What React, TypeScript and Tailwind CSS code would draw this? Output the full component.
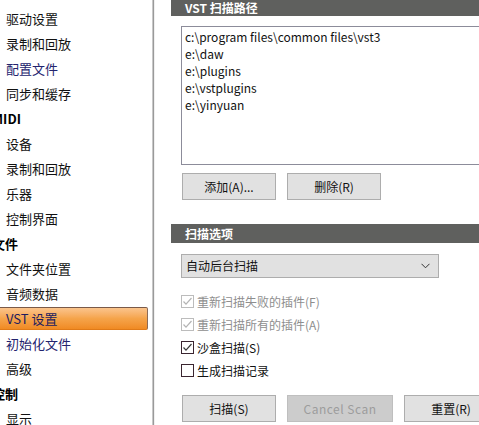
import type { ReactNode } from "react";

const FONT = "font-['Segoe_UI','Noto_Sans_CJK_SC','Noto_Sans',sans-serif]";

type NavRow =
  | { kind: "head"; label: string }
  | { kind: "item"; label: string; navy?: boolean; selected?: boolean };

const nav: NavRow[] = [
  { kind: "item", label: "驱动设置" },
  { kind: "item", label: "录制和回放" },
  { kind: "item", label: "配置文件", navy: true },
  { kind: "item", label: "同步和缓存" },
  { kind: "head", label: "MIDI" },
  { kind: "item", label: "设备" },
  { kind: "item", label: "录制和回放" },
  { kind: "item", label: "乐器" },
  { kind: "item", label: "控制界面" },
  { kind: "head", label: "文件" },
  { kind: "item", label: "文件夹位置" },
  { kind: "item", label: "音频数据" },
  { kind: "item", label: "VST 设置", selected: true },
  { kind: "item", label: "初始化文件", navy: true },
  { kind: "item", label: "高级" },
  { kind: "head", label: "控制" },
  { kind: "item", label: "显示" },
];

const paths = [
  "c:\\program files\\common files\\vst3",
  "e:\\daw",
  "e:\\plugins",
  "e:\\vstplugins",
  "e:\\yinyuan",
];

function SectionBar({ children, tall }: { children: ReactNode; tall?: boolean }) {
  return (
    <div
      className={`flex items-center bg-[#5f605e] pl-[14px] text-[12px] font-bold text-white ${
        tall ? "h-[19px]" : "h-[17px]"
      }`}
    >
      {children}
    </div>
  );
}

function Button({
  children,
  width,
  disabled,
}: {
  children: ReactNode;
  width: string;
  disabled?: boolean;
}) {
  return (
    <div
      className={`flex h-[27px] shrink-0 items-center justify-center border text-[12px] ${width} ${
        disabled
          ? "border-[#bfbfbf] bg-[#cccccc] text-[#9c9c9c] tracking-[0.5px]"
          : "border-[#adadad] bg-[#e1e1e1] text-[#111]"
      }`}
    >
      {children}
    </div>
  );
}

function Check({ checked, disabled, label }: { checked: boolean; disabled?: boolean; label: string }) {
  return (
    <div className="flex h-[23px] items-center gap-[3px]">
      <span
        className={`flex h-[13px] w-[13px] items-center justify-center border bg-white ${
          disabled ? "border-[#bcbcbc]" : "border-[#3a2530]"
        }`}
      >
        {checked ? (
          <svg width="11" height="11" viewBox="0 0 11 11">
            <path
              d="M1.5 5.5 L4 8.2 L9.5 2"
              fill="none"
              stroke={disabled ? "#b4b4b4" : "#3a3a3a"}
              strokeWidth="1.2"
            />
          </svg>
        ) : null}
      </span>
      <span className={`text-[12px] ${disabled ? "text-[#8e8e8e]" : "text-[#111]"}`}>{label}</span>
    </div>
  );
}

export default function App() {
  return (
    <div className={`flex h-[425px] w-[479px] overflow-hidden bg-white ${FONT}`}>
      {/* tree is scrolled a little, so group headers sit partly off the left edge */}
      <aside className="w-[152px] shrink-0 overflow-hidden pt-[6px]">
        {nav.map((row, i) =>
          row.kind === "head" ? (
            <div
              key={i}
              className="flex h-[25px] items-center whitespace-nowrap -ml-[8px] text-[13px] font-bold text-black"
            >
              {row.label}
            </div>
          ) : row.selected ? (
            <div key={i} className="flex h-[25px] items-center">
              <div className="flex h-[23px] w-[148px] items-center rounded-r-[2px] border border-l-0 border-t-[#7a5a48] border-r-[#8a6a58] border-b-[#e07a18] bg-gradient-to-b from-[#fbc48c] via-[#f5a44a] to-[#f08a22] pl-[6px] text-[13px] text-[#1c1c60]">
                {row.label}
              </div>
            </div>
          ) : (
            <div
              key={i}
              className={`flex h-[25px] items-center pl-[6px] text-[13px] ${
                row.navy ? "text-[#23236e]" : "text-[#111]"
              }`}
            >
              {row.label}
            </div>
          )
        )}
      </aside>

      <div className="w-[1px] shrink-0 bg-[#c8c8c8]" />
      <div className="w-[1px] shrink-0 bg-[#9a9a9a]" />
      <div className="w-[1px] shrink-0 bg-[#f0f0f0]" />

      <main className="min-w-0 flex-1 pl-[16px]">
        <div className="-mt-[1px]">
          <SectionBar>VST 扫描路径</SectionBar>
        </div>

        <div className="ml-[10px] mt-[10px] h-[139px] w-[320px] border border-[#8c8c9a] bg-white pl-[3px] pt-[1px] text-[12px] text-[#111]">
          {paths.map((p) => (
            <div key={p} className="h-[17px] leading-[17px]">
              {p}
            </div>
          ))}
        </div>

        <div className="ml-[11px] mt-[8px] flex gap-[11px]">
          <Button width="w-[94px]">添加(A)...</Button>
          <Button width="w-[94px]">删除(R)</Button>
        </div>

        <div className="mt-[24px]">
          <SectionBar tall>扫描选项</SectionBar>
        </div>

        <div className="ml-[10px] mt-[11px] flex h-[24px] w-[258px] items-center justify-between border border-[#adadad] bg-[#e1e1e1] pl-[4px] pr-[8px] text-[12px] text-[#111]">
          <span>自动后台扫描</span>
          <svg width="9" height="6" viewBox="0 0 9 6">
            <path d="M0.5 0.8 L4.5 4.8 L8.5 0.8" fill="none" stroke="#333" strokeWidth="1" />
          </svg>
        </div>

        <div className="ml-[10px] mt-[12px] flex flex-col">
          <Check checked disabled label="重新扫描失败的插件(F)" />
          <Check checked disabled label="重新扫描所有的插件(A)" />
          <Check checked label="沙盒扫描(S)" />
          <Check checked={false} label="生成扫描记录" />
        </div>

        <div className="ml-[11px] mt-[13px] flex gap-[11px]">
          <Button width="w-[94px]">扫描(S)</Button>
          <Button width="w-[106px]" disabled>
            Cancel Scan
          </Button>
          <Button width="w-[94px]">重置(R)</Button>
        </div>
      </main>
    </div>
  );
}
